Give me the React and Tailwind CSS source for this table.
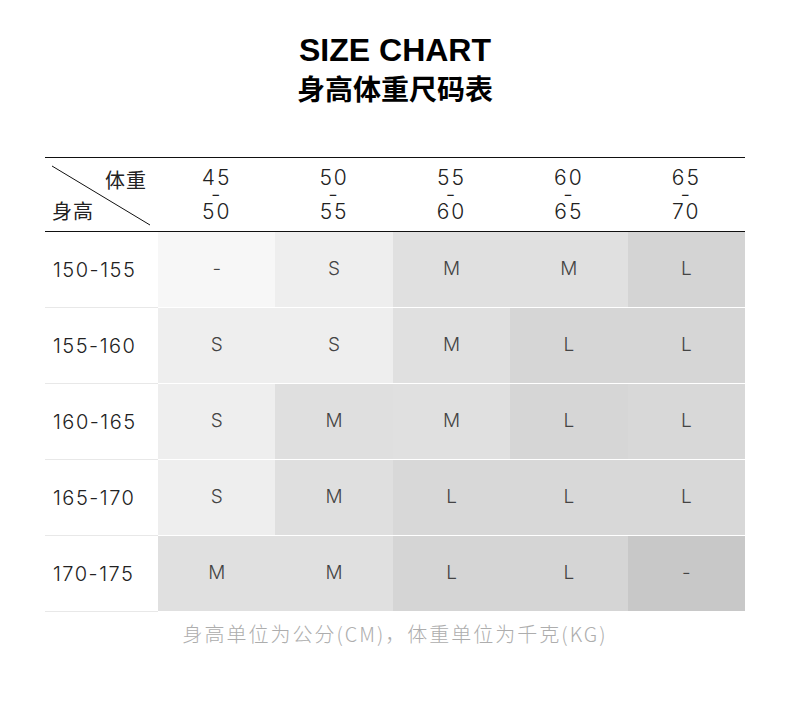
import React from "react";

const weights = [
  ["45", "50"],
  ["50", "55"],
  ["55", "60"],
  ["60", "65"],
  ["65", "70"],
];

// each cell: [label, background]
const rows = [
  {
    h: "150-155",
    cells: [
      ["-", "bg-[#f7f7f7]"],
      ["S", "bg-[#eeeeee]"],
      ["M", "bg-[#e0e0e0]"],
      ["M", "bg-[#e0e0e0]"],
      ["L", "bg-[#d4d4d4]"],
    ],
  },
  {
    h: "155-160",
    cells: [
      ["S", "bg-[#eeeeee]"],
      ["S", "bg-[#eeeeee]"],
      ["M", "bg-[#e0e0e0]"],
      ["L", "bg-[#d6d6d6]"],
      ["L", "bg-[#d6d6d6]"],
    ],
  },
  {
    h: "160-165",
    cells: [
      ["S", "bg-[#eeeeee]"],
      ["M", "bg-[#dfdfdf]"],
      ["M", "bg-[#e0e0e0]"],
      ["L", "bg-[#d6d6d6]"],
      ["L", "bg-[#d8d8d8]"],
    ],
  },
  {
    h: "165-170",
    cells: [
      ["S", "bg-[#eeeeee]"],
      ["M", "bg-[#dfdfdf]"],
      ["L", "bg-[#d8d8d8]"],
      ["L", "bg-[#d8d8d8]"],
      ["L", "bg-[#d8d8d8]"],
    ],
  },
  {
    h: "170-175",
    cells: [
      ["M", "bg-[#e0e0e0]"],
      ["M", "bg-[#e0e0e0]"],
      ["L", "bg-[#d5d5d5]"],
      ["L", "bg-[#d5d5d5]"],
      ["-", "bg-[#c8c8c8]"],
    ],
  },
];

const num = { fontFamily: "Inter, 'Noto Sans', 'Noto Sans CJK SC', sans-serif" };
const cjk = { fontFamily: "'Noto Sans CJK SC', 'Noto Sans', sans-serif" };

export default function App() {
  return (
    <div className="w-[790px] h-[727px] bg-white">
      {/* Title */}
      <div className="pt-[31px] flex flex-col items-center text-black">
        <h1
          className="text-[32px] leading-[39px] font-bold"
          style={{ fontFamily: "'Liberation Sans', Arial, sans-serif" }}
        >
          SIZE CHART
        </h1>
        <h2 className="text-[28px] leading-[36px] font-bold" style={cjk}>
          身高体重尺码表
        </h2>
      </div>

      {/* Table */}
      <div className="w-[700px] mx-auto mt-[51px]">
        {/* header */}
        <div className="grid grid-cols-[113px_repeat(5,1fr)] h-[75px] border-t border-b border-[#111]">
          <div className="relative">
            <svg className="absolute inset-0" width="113" height="73">
              <line x1="7" y1="8" x2="105" y2="67" stroke="#111" strokeWidth="1" />
            </svg>
            <span
              className="absolute left-[60px] top-[9px] text-[20px] leading-[26px] text-[#222] tracking-[1px]"
              style={cjk}
            >
              体重
            </span>
            <span
              className="absolute left-[7px] top-[40px] text-[20px] leading-[26px] text-[#222] tracking-[1px]"
              style={cjk}
            >
              身高
            </span>
          </div>
          {weights.map(([a, b]) => (
            <div key={a} className="flex items-center justify-center">
              <p
                className="text-center text-[21px] leading-[17px] font-light text-[#222] tracking-[2px]"
                style={num}
              >
                {a}
                <br />-<br />
                {b}
              </p>
            </div>
          ))}
        </div>

        {/* body */}
        {rows.map((r) => (
          <div key={r.h} className="grid grid-cols-[113px_repeat(5,1fr)] h-[76px]">
            <div
              className="flex items-center pl-[8px] text-[20px] font-light text-[#222] tracking-[1.5px] border-b border-[#e8e8e8]"
              style={num}
            >
              {r.h}
            </div>
            {r.cells.map(([t, bg], i) => (
              <div
                key={i}
                className={`flex items-center justify-center text-[19px] font-light text-[#444] border-b border-white ${bg}`}
                style={num}
              >
                {t}
              </div>
            ))}
          </div>
        ))}
      </div>

      {/* footnote */}
      <p
        className="mt-[8px] text-center text-[20px] leading-[28px] text-[#adadad] tracking-[2px] font-light"
        style={cjk}
      >
        身高单位为公分(CM)，体重单位为千克(KG)
      </p>
    </div>
  );
}
